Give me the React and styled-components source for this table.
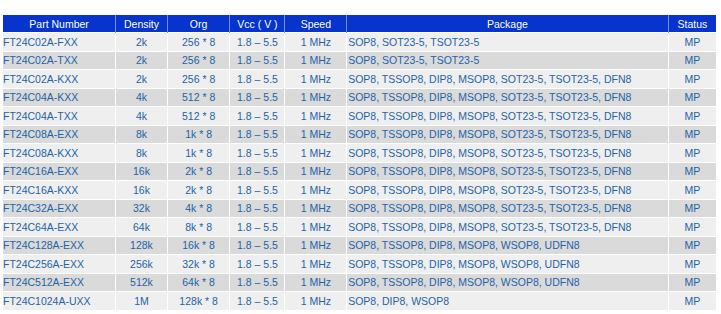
import React from "react";
import styled, { createGlobalStyle } from "styled-components";

const Global = createGlobalStyle`
  html, body { margin: 0; padding: 0; background: #ffffff; }
  body { font-family: "Liberation Sans", Arial, sans-serif; }
`;

const Wrap = styled.div`
  padding: 15px 5px 0 3px;
`;

const Table = styled.table`
  border-collapse: collapse;
  table-layout: fixed;
  width: 713px;
  font-family: "Liberation Sans", Arial, sans-serif;
  font-size: 10.5px;
`;

const HeadCell = styled.th`
  background: #0634cc;
  color: #ffffff;
  font-weight: normal;
  height: 17px;
  padding: 0;
  text-align: center;
  border-left: 1px solid #6f8fe6;
  border-right: 1px solid #6f8fe6;
  white-space: nowrap;
  &:first-child { border-left: none; }
  &:last-child { border-right: none; }
`;

const Row = styled.tr`
  background: ${(p) => (p.$alt ? "#dadada" : "#efefef")};
`;

const Cell = styled.td`
  color: #1f63a6;
  height: 17.5px;
  padding: 0 0 0 ${(p) => (p.$left ? "1px" : "0")};
  text-align: ${(p) => (p.$left ? "left" : "center")};
  border: 1px solid #ffffff;
  white-space: nowrap;
  overflow: hidden;
  &:first-child { border-left: none; padding-left: 0; }
  &:last-child { border-right: none; }
`;

const cols = [112.7, 51.6, 62.7, 55, 61.7, 321.6, 47.7];

const heads = ["Part Number", "Density", "Org", "Vcc ( V )", "Speed", "Package", "Status"];

const P1 = "SOP8, SOT23-5, TSOT23-5";
const P2 = "SOP8, TSSOP8, DIP8, MSOP8, SOT23-5, TSOT23-5, DFN8";
const P3 = "SOP8, TSSOP8, DIP8, MSOP8, WSOP8, UDFN8";

const rows = [
  ["FT24C02A-FXX", "2k", "256 * 8", P1],
  ["FT24C02A-TXX", "2k", "256 * 8", P1],
  ["FT24C02A-KXX", "2k", "256 * 8", P2],
  ["FT24C04A-KXX", "4k", "512 * 8", P2],
  ["FT24C04A-TXX", "4k", "512 * 8", P2],
  ["FT24C08A-EXX", "8k", "1k * 8", P2],
  ["FT24C08A-KXX", "8k", "1k * 8", P2],
  ["FT24C16A-EXX", "16k", "2k * 8", P2],
  ["FT24C16A-KXX", "16k", "2k * 8", P2],
  ["FT24C32A-EXX", "32k", "4k * 8", P2],
  ["FT24C64A-EXX", "64k", "8k * 8", P2],
  ["FT24C128A-EXX", "128k", "16k * 8", P3],
  ["FT24C256A-EXX", "256k", "32k * 8", P3],
  ["FT24C512A-EXX", "512k", "64k * 8", P3],
  ["FT24C1024A-UXX", "1M", "128k * 8", "SOP8, DIP8, WSOP8"],
];

export default function App() {
  return (
    <>
      <Global />
      <Wrap>
        <Table>
          <colgroup>
            {cols.map((w, i) => (
              <col key={i} style={{ width: w + "px" }} />
            ))}
          </colgroup>
          <thead>
            <tr>
              {heads.map((h) => (
                <HeadCell key={h}>{h}</HeadCell>
              ))}
            </tr>
          </thead>
          <tbody>
            {rows.map((r, i) => (
              <Row key={r[0]} $alt={i % 2 === 1}>
                <Cell $left>{r[0]}</Cell>
                <Cell>{r[1]}</Cell>
                <Cell>{r[2]}</Cell>
                <Cell>1.8 – 5.5</Cell>
                <Cell>1 MHz</Cell>
                <Cell $left>{r[3]}</Cell>
                <Cell>MP</Cell>
              </Row>
            ))}
          </tbody>
        </Table>
      </Wrap>
    </>
  );
}
